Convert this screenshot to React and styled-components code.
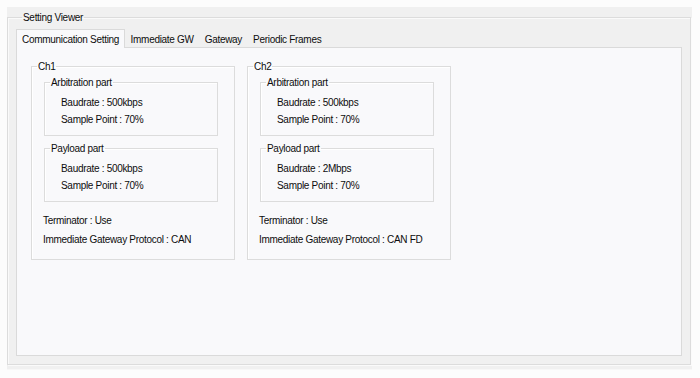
import React from "react";
import styled, { createGlobalStyle } from "styled-components";

const GlobalStyle = createGlobalStyle`
  html, body {
    margin: 0;
    padding: 0;
    background: #fcfcfc;
  }
  body {
    font-family: "Liberation Sans", Arial, sans-serif;
    font-size: 10px;
    letter-spacing: -0.3px;
    color: #0d0d0d;
  }
`;

const tabs = ["Communication Setting", "Immediate GW", "Gateway", "Periodic Frames"];

const channels = [
  {
    name: "Ch1",
    arbitration: { baud: "500kbps", sample: "70%" },
    payload: { baud: "500kbps", sample: "70%" },
    terminator: "Use",
    protocol: "CAN",
  },
  {
    name: "Ch2",
    arbitration: { baud: "500kbps", sample: "70%" },
    payload: { baud: "2Mbps", sample: "70%" },
    terminator: "Use",
    protocol: "CAN FD",
  },
];

/**
 *   App
 *
 *  Setting Viewer window with tabbed channel settings
 *
 */
const App = () => {
  return (
    <>
      <GlobalStyle />
      <Window>
        <ViewerGroup>
          <ViewerLegend>Setting Viewer</ViewerLegend>
          <TabStrip>
            {tabs.map((t, i) => (
              <Tab key={t} $active={i === 0}>
                {t}
              </Tab>
            ))}
          </TabStrip>
          <TabPage>
            {channels.map((ch) => (
              <ChannelBox key={ch.name}>
                <BoxLegend>{ch.name}</BoxLegend>
                <ChannelBody>
                  <PartBox>
                    <BoxLegend>Arbitration part</BoxLegend>
                    <PartBody>
                      <Line>Baudrate : {ch.arbitration.baud}</Line>
                      <Line>Sample Point : {ch.arbitration.sample}</Line>
                    </PartBody>
                  </PartBox>
                  <PartBox>
                    <BoxLegend>Payload part</BoxLegend>
                    <PartBody>
                      <Line>Baudrate : {ch.payload.baud}</Line>
                      <Line>Sample Point : {ch.payload.sample}</Line>
                    </PartBody>
                  </PartBox>
                  <Footer>
                    <FooterLine>Terminator : {ch.terminator}</FooterLine>
                    <FooterLine>Immediate Gateway Protocol : {ch.protocol}</FooterLine>
                  </Footer>
                </ChannelBody>
              </ChannelBox>
            ))}
          </TabPage>
        </ViewerGroup>
      </Window>
    </>
  );
};

const Window = styled.div`
  margin: 7px 8px 0 7px;
  height: 363px;
  background: #f0f0f0;
  box-sizing: border-box;
  padding: 4px 1px 0 0;
  border-bottom: 1px solid #f7f7f7;
`;

const ViewerGroup = styled.fieldset`
  margin: 0;
  padding: 4px 8px 8px 8px;
  min-width: 0;
  height: 354px;
  box-sizing: border-box;
  border: 1px solid #dcdcdc;
  box-shadow: inset 1px 1px 0 #fafafa, 1px 1px 0 #fafafa;
  display: flex;
  flex-direction: column;
`;

const ViewerLegend = styled.legend`
  padding: 0 1px;
  margin-left: 6px;
  line-height: 13px;
`;

const TabStrip = styled.div`
  display: flex;
  align-items: flex-end;
  height: 19px;
  position: relative;
  z-index: 1;
`;

const Tab = styled.div`
  height: ${(p) => (p.$active ? "19px" : "17px")};
  line-height: ${(p) => (p.$active ? "19px" : "17px")};
  padding: 0 ${(p) => (p.$active ? "5px" : "4.5px")};
  box-sizing: border-box;
  background: ${(p) => (p.$active ? "#f9f9fb" : "#f0f0f0")};
  border: 1px solid ${(p) => (p.$active ? "#dadada" : "transparent")};
  border-bottom: none;
  white-space: nowrap;
  margin-bottom: ${(p) => (p.$active ? "-1px" : "0")};
`;

const TabPage = styled.div`
  flex: 1;
  background: #f9f9fb;
  border: 1px solid #dadada;
  display: flex;
  align-items: flex-start;
  gap: 12px;
  padding: 12px 14px;
`;

const BoxLegend = styled.legend`
  padding: 0 1px;
  margin-left: 5px;
  line-height: 13px;
`;

const ChannelBox = styled.fieldset`
  margin: 0;
  padding: 0;
  min-width: 0;
  width: 204px;
  box-sizing: border-box;
  border: 1px solid #dcdcdc;
  box-shadow: inset 1px 1px 0 #ffffff;
`;

const ChannelBody = styled.div`
  padding: 3px 16px 10px 11px;
  display: flex;
  flex-direction: column;
  gap: 6px;
`;

const PartBox = styled.fieldset`
  margin: 0 0 0 1px;
  padding: 0;
  min-width: 0;
  width: 174px;
  box-sizing: border-box;
  border: 1px solid #dcdcdc;
  box-shadow: inset 1px 1px 0 #ffffff;
`;

const PartBody = styled.div`
  padding: 5px 8px 7px 16px;
`;

const Line = styled.div`
  line-height: 17px;
  white-space: nowrap;
`;

const Footer = styled.div`
  padding-top: 3px;
`;

const FooterLine = styled.div`
  line-height: 19px;
  white-space: nowrap;
`;

export default App;
